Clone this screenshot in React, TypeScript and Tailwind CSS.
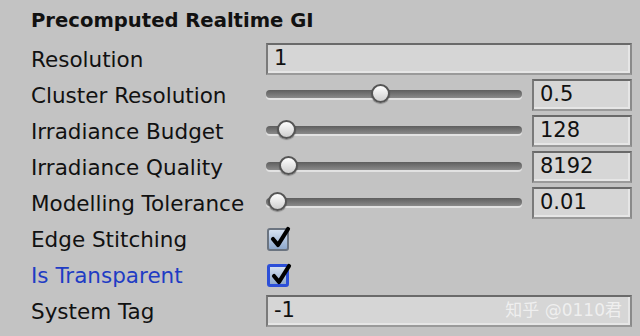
const font = { fontFamily: '"DejaVu Sans", "Noto Sans CJK SC", sans-serif' };

const Field = ({ value, wide, mark }: { value: string; wide?: boolean; mark?: boolean }) => (
  <div
    className={`${wide ? "flex-1" : "w-[100px]"} h-[32px] flex items-center justify-between pl-[6px] pr-[8px] bg-[#d6d6d6] border-2 border-t-[#6a6a6a] border-l-[#7a7a7a] border-r-[#8a8a8a] border-b-[#9a9a9a] shadow-[inset_-2px_-2px_0_#e6e6e6] text-[21px] text-[#111]`}
  >
    <span>{value}</span>
    {mark && <span className="text-[17px] text-[#f2f2f2] opacity-90">知乎 @0110君</span>}
  </div>
);

const Slider = ({ pos, value }: { pos: number; value: string }) => (
  <div className="flex-1 flex items-center gap-[10px]">
    <div className="relative w-[256px] h-[10px]">
      <div className="absolute inset-x-0 top-0 h-[8px] rounded-full bg-gradient-to-b from-[#5e5e5e] to-[#8a8a8a] shadow-[0_2px_0_#e2e2e2]" />
      <div
        className="absolute top-[-6px] w-[19px] h-[19px] rounded-full border-2 border-[#555] bg-gradient-to-b from-[#ffffff] to-[#cfcfcf] shadow-[0_1px_1px_rgba(0,0,0,0.3)]"
        style={{ left: pos - 9.5 }}
      />
    </div>
    <Field value={value} />
  </div>
);

const Check = ({ blue }: { blue?: boolean }) => (
  <div
    className={`relative ml-[1px] w-[22px] h-[23px] rounded-[3px] ${blue ? "border-[3px] border-[#2c4fd8]" : "border-2 border-[#6b7480]"} bg-gradient-to-b from-[#d6e2f2] to-[#8ea8cc]`}
  >
    <svg width="24" height="26" viewBox="0 0 24 26" className="absolute left-[-1px] top-[-6px]">
      <path d="M5 15 L10 21 L20 5" fill="none" stroke="#000" strokeWidth="4.2" strokeLinecap="round" strokeLinejoin="round" />
    </svg>
  </div>
);

const Row = ({ label, blue, children }: { label: string; blue?: boolean; children: React.ReactNode }) => (
  <div className="h-[36px] flex items-center">
    <div className={`w-[235px] pt-[2px] text-[21.5px] ${blue ? "text-[#1f3cc4]" : "text-[#111]"}`}>{label}</div>
    <div className="flex-1 flex items-center">{children}</div>
  </div>
);

export default function App() {
  return (
    <div className="w-[640px] h-[336px] overflow-hidden bg-[#c3c3c3] pl-[31px] pr-[8px]" style={font}>
      <div className="h-[41px] flex items-center text-[19.6px] font-bold text-[#111]">Precomputed Realtime GI</div>
      <Row label="Resolution">
        <Field value="1" wide />
      </Row>
      <Row label="Cluster Resolution">
        <Slider pos={114} value="0.5" />
      </Row>
      <Row label="Irradiance Budget">
        <Slider pos={20} value="128" />
      </Row>
      <Row label="Irradiance Quality">
        <Slider pos={22} value="8192" />
      </Row>
      <Row label="Modelling Tolerance">
        <Slider pos={11} value="0.01" />
      </Row>
      <Row label="Edge Stitching">
        <Check />
      </Row>
      <Row label="Is Transparent" blue>
        <Check blue />
      </Row>
      <Row label="System Tag">
        <Field value="-1" wide mark />
      </Row>
    </div>
  );
}
